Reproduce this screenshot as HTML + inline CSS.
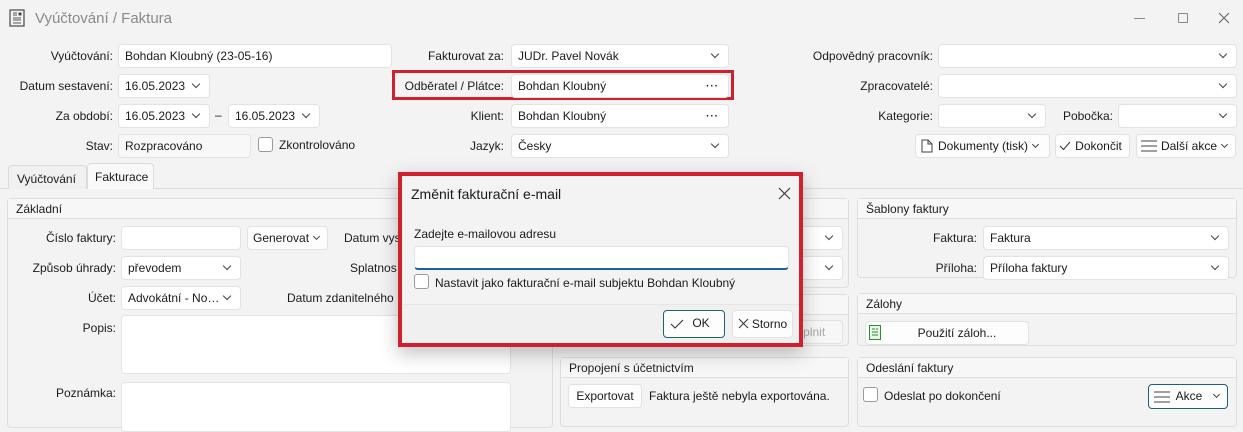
<!DOCTYPE html>
<html><head><meta charset="utf-8"><style>
*{box-sizing:border-box;margin:0;padding:0}
body{width:1243px;height:414px;overflow:hidden;background:#f3f3f3;font-family:"Liberation Sans",sans-serif;font-size:12px;color:#1b1b1b;position:relative}
.a{position:absolute;white-space:nowrap}
.f{position:absolute;background:#fff;border:1px solid #e3e3e3;border-radius:4px;height:24px;padding:4px 6px;line-height:15px;white-space:nowrap;overflow:hidden}
.l{position:absolute;text-align:right;white-space:nowrap;line-height:24px}
.ch{position:absolute;right:10px;top:6px;width:6px;height:6px;border-right:1.1px solid #444;border-bottom:1.1px solid #444;transform:rotate(45deg)}
.dots{position:absolute;right:9px;top:4px;font-weight:bold;letter-spacing:1px;font-size:10px}
.btn{position:absolute;background:#fdfdfd;border:1px solid #e2e2e2;border-radius:4px;height:24px;line-height:22px;text-align:center;white-space:nowrap}
.pan{position:absolute;border:1px solid #dedede;border-radius:4px;background:#f3f3f3}
.ph{height:20px;border-bottom:1px solid #dedede;padding:1px 8px;line-height:18px;background:#f7f7f7}
.cb{position:absolute;width:15px;height:15px;border:1px solid #9a9a9a;border-radius:3px;background:#fff}
.sc{display:inline-block;width:5px;height:5px;border-right:1px solid #444;border-bottom:1px solid #444;transform:rotate(45deg);margin:0 0 3px 5px}
</style></head><body>
<svg class="a" style="left:9px;top:9px" width="16" height="18" viewBox="0 0 16 18"><rect x="1" y="1" width="14" height="16" fill="none" stroke="#555" stroke-width="1.3"/><path d="M4 4h4M4 6h4M10 4h2v2h-2zM4 9h8M4 11h8M4 14h8" stroke="#555" stroke-width="1"/></svg>
<div class="a" style="left:35px;top:10px;font-size:15px;color:#8a8a8a">Vyúčtování / Faktura</div>
<div class="a" style="left:1134px;top:18px;width:11px;border-top:1px solid #888"></div>
<div class="a" style="left:1178px;top:13px;width:10px;height:10px;border:1px solid #888;border-radius:1px"></div>
<svg class="a" style="left:1218px;top:12px" width="12" height="12"><path d="M1 1l10 10M11 1L1 11" stroke="#666" stroke-width="1.1"/></svg>

<div class="l" style="left:0;width:113px;top:44px">Vyúčtování:</div>
<div class="f" style="left:118px;top:44px;width:274px">Bohdan Kloubný (23-05-16)</div>
<div class="l" style="left:0;width:113px;top:74px">Datum sestavení:</div>
<div class="f" style="left:118px;top:74px;width:92px">16.05.2023<span class="ch"></span></div>
<div class="l" style="left:0;width:113px;top:104px">Za období:</div>
<div class="f" style="left:118px;top:104px;width:92px">16.05.2023<span class="ch"></span></div>
<div class="a" style="left:215px;top:108px">–</div>
<div class="f" style="left:228px;top:104px;width:92px">16.05.2023<span class="ch"></span></div>
<div class="l" style="left:0;width:113px;top:134px">Stav:</div>
<div class="f" style="left:118px;top:134px;width:133px;background:#f8f8f8">Rozpracováno</div>
<div class="cb" style="left:258px;top:137px"></div>
<div class="a" style="left:279px;top:138px">Zkontrolováno</div>

<div class="l" style="left:380px;width:124px;top:44px">Fakturovat za:</div>
<div class="f" style="left:511px;top:44px;width:218px">JUDr. Pavel Novák<span class="ch"></span></div>
<div class="a" style="left:392px;top:70px;width:342px;height:30px;border:3px solid #d0202e"></div>
<div class="l" style="left:380px;width:124px;top:74px">Odběratel / Plátce:</div>
<div class="f" style="left:511px;top:74px;width:218px">Bohdan Kloubný<span class="dots">···</span></div>
<div class="l" style="left:380px;width:124px;top:104px">Klient:</div>
<div class="f" style="left:511px;top:104px;width:218px">Bohdan Kloubný<span class="dots">···</span></div>
<div class="l" style="left:380px;width:124px;top:134px">Jazyk:</div>
<div class="f" style="left:511px;top:134px;width:218px">Česky<span class="ch"></span></div>

<div class="l" style="left:780px;width:153px;top:44px">Odpovědný pracovník:</div>
<div class="f" style="left:938px;top:44px;width:299px"><span class="ch"></span></div>
<div class="l" style="left:780px;width:153px;top:74px">Zpracovatelé:</div>
<div class="f" style="left:938px;top:74px;width:299px"><span class="ch"></span></div>
<div class="l" style="left:780px;width:153px;top:104px">Kategorie:</div>
<div class="f" style="left:938px;top:104px;width:108px"><span class="ch"></span></div>
<div class="l" style="left:1050px;width:63px;top:104px">Pobočka:</div>
<div class="f" style="left:1118px;top:104px;width:119px"><span class="ch"></span></div>
<div class="btn" style="left:915px;top:134px;width:135px;text-align:left;padding-left:22px">Dokumenty (tisk)<span class="sc"></span></div>
<svg class="a" style="left:921px;top:139px" width="12" height="14"><path d="M1 1h6l4 4v8H1z M7 1v4h4" fill="none" stroke="#444"/></svg>
<div class="btn" style="left:1055px;top:134px;width:75px;padding-left:12px">Dokončit</div>
<svg class="a" style="left:1059px;top:141px" width="12" height="10"><path d="M1 5l3.5 3.5L11 1" fill="none" stroke="#333"/></svg>
<div class="btn" style="left:1136px;top:134px;width:100px;text-align:right;padding-right:8px">Další akce<span class="sc"></span></div>
<svg class="a" style="left:1141px;top:140px" width="16" height="12"><path d="M0 1h16M0 6h16M0 11h16" stroke="#444"/></svg>

<div class="a" style="left:0;top:188px;width:1243px;border-top:1px solid #dcdcdc"></div>
<div class="a" style="left:8px;top:165px;width:79px;height:24px;border:1px solid #dcdcdc;border-bottom:none;border-radius:4px 4px 0 0;padding:6px 8px;background:#f0f0f0">Vyúčtování</div>
<div class="a" style="left:87px;top:163px;width:67px;height:26px;border:1px solid #dcdcdc;border-bottom:none;border-radius:4px 4px 0 0;padding:6px 7px;background:#f9f9f9">Fakturace</div>

<div class="pan" style="left:7px;top:198px;width:546px;height:230px"><div class="ph">Základní</div></div>
<div class="l" style="left:0;width:116px;top:226px">Číslo faktury:</div>
<div class="f" style="left:121px;top:226px;width:120px"></div>
<div class="btn" style="left:247px;top:226px;width:81px;text-align:left;padding-left:5px">Generovat<span class="sc"></span></div>
<div class="a" style="left:344px;top:231px">Datum vys</div>
<div class="l" style="left:0;width:116px;top:256px">Způsob úhrady:</div>
<div class="f" style="left:121px;top:256px;width:120px">převodem<span class="ch"></span></div>
<div class="a" style="left:350px;top:261px">Splatnos</div>
<div class="l" style="left:0;width:116px;top:286px">Účet:</div>
<div class="f" style="left:121px;top:286px;width:120px;padding-right:20px;text-overflow:ellipsis">Advokátní - Nov...<span class="ch"></span></div>
<div class="a" style="left:287px;top:291px">Datum zdanitelného</div>
<div class="l" style="left:0;width:116px;top:316px">Popis:</div>
<div class="f" style="left:121px;top:315px;width:390px;height:59px"></div>
<div class="l" style="left:0;width:116px;top:381px">Poznámka:</div>
<div class="f" style="left:121px;top:382px;width:390px;height:50px"></div>

<div class="pan" style="left:560px;top:198px;width:289px;height:90px"><div class="ph"></div></div>
<div class="f" style="left:790px;top:226px;width:53px"><span class="ch"></span></div>
<div class="f" style="left:790px;top:256px;width:53px"><span class="ch"></span></div>
<div class="pan" style="left:560px;top:294px;width:289px;height:52px"><div class="ph"></div></div>
<div class="btn" style="left:770px;top:320px;width:73px;color:#aaa;background:#f7f7f7">Doplnit</div>
<div class="pan" style="left:560px;top:357px;width:289px;height:70px"><div class="ph">Propojení s účetnictvím</div></div>
<div class="btn" style="left:568px;top:384px;width:74px">Exportovat</div>
<div class="a" style="left:649px;top:389px">Faktura ještě nebyla exportována.</div>

<div class="pan" style="left:857px;top:198px;width:380px;height:80px"><div class="ph">Šablony faktury</div></div>
<div class="l" style="left:860px;width:117px;top:226px">Faktura:</div>
<div class="f" style="left:983px;top:226px;width:246px">Faktura<span class="ch"></span></div>
<div class="l" style="left:860px;width:117px;top:256px">Příloha:</div>
<div class="f" style="left:983px;top:256px;width:246px">Příloha faktury<span class="ch"></span></div>
<div class="pan" style="left:857px;top:293px;width:380px;height:53px"><div class="ph">Zálohy</div></div>
<div class="btn" style="left:865px;top:321px;width:164px;padding-left:20px">Použití záloh...</div>
<svg class="a" style="left:869px;top:325px" width="12" height="15"><rect x=".5" y=".5" width="11" height="14" fill="#e8f5e8" stroke="#2e8b3a"/><path d="M3 4h3M7 4h2M3 7h6M3 10h6" stroke="#2e8b3a"/></svg>
<div class="pan" style="left:857px;top:357px;width:380px;height:70px"><div class="ph">Odeslání faktury</div></div>
<div class="cb" style="left:863px;top:387px"></div>
<div class="a" style="left:884px;top:389px">Odeslat po dokončení</div>
<div class="btn" style="left:1148px;top:384px;width:80px;height:25px;border:1.5px solid #1f5f7a;text-align:right;padding-right:8px">Akce &nbsp;<span class="sc"></span></div>
<svg class="a" style="left:1154px;top:391px" width="16" height="12"><path d="M0 1h16M0 6h16M0 11h16" stroke="#444"/></svg>

<div class="a" style="left:398px;top:172px;width:405px;height:175px;border:4px solid #d0202e;background:#f3f3f3;box-shadow:0 6px 18px rgba(0,0,0,.25)">
 <div class="a" style="left:9px;top:10px;font-size:14px">Změnit fakturační e-mail</div>
 <svg class="a" style="left:376px;top:11px" width="13" height="13"><path d="M1 1l11 11M12 1L1 12" stroke="#333" stroke-width="1.1"/></svg>
 <div class="a" style="left:12px;top:51px">Zadejte e-mailovou adresu</div>
 <div class="a" style="left:12px;top:70px;width:375px;height:24px;background:#fff;border:1px solid #e3e3e3;border-bottom:2px solid #1f5f9a;border-radius:4px"></div>
 <div class="cb" style="left:12px;top:98px"></div>
 <div class="a" style="left:33px;top:100px">Nastavit jako fakturační e-mail subjektu Bohdan Kloubný</div>
 <div class="a" style="left:0;top:128px;width:397px;height:39px;border-top:1px solid #e6e6e6;background:#f0f0f0"></div>
 <div class="btn" style="left:261px;top:134px;width:62px;height:28px;line-height:25px;border:1.5px solid #1f5f7a;padding-left:14px">OK</div>
 <svg class="a" style="left:268px;top:143px" width="14" height="10"><path d="M1 5l4 4 8-8" fill="none" stroke="#333" stroke-width="1.1"/></svg>
 <div class="btn" style="left:330px;top:134px;width:61px;height:28px;line-height:26px;padding-left:14px">Storno</div>
 <svg class="a" style="left:336px;top:142px" width="11" height="11"><path d="M1 1l9 9M10 1L1 10" stroke="#333"/></svg>
</div>
</body></html>
